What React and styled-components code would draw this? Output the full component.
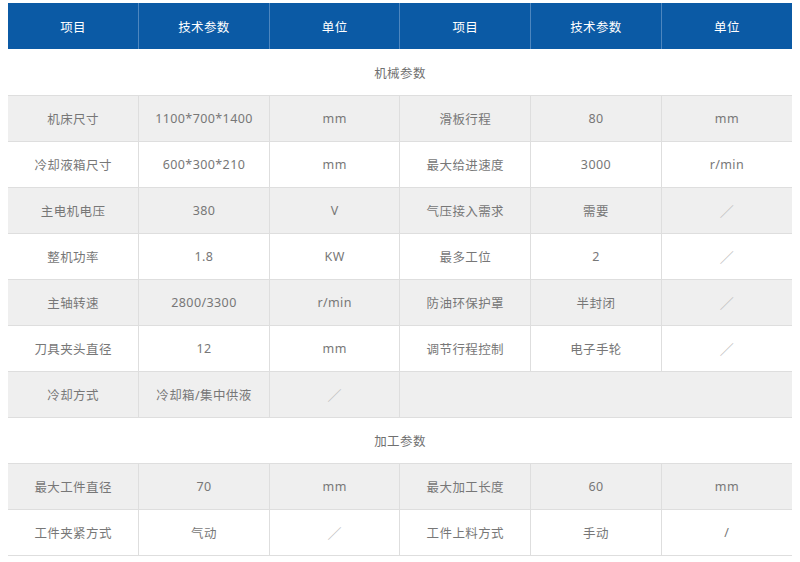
import React from "react";
import styled, { createGlobalStyle, css } from "styled-components";

const GlobalStyle = createGlobalStyle`
  html, body {
    margin: 0;
    padding: 0;
    background: #ffffff;
  }
  body {
    font-family: "Noto Sans", "Noto Sans CJK SC", sans-serif;
  }
`;

const mechanical = [
  ["机床尺寸", "1100*700*1400", "mm", "滑板行程", "80", "mm"],
  ["冷却液箱尺寸", "600*300*210", "mm", "最大给进速度", "3000", "r/min"],
  ["主电机电压", "380", "V", "气压接入需求", "需要", "／"],
  ["整机功率", "1.8", "KW", "最多工位", "2", "／"],
  ["主轴转速", "2800/3300", "r/min", "防油环保护罩", "半封闭", "／"],
  ["刀具夹头直径", "12", "mm", "调节行程控制", "电子手轮", "／"],
];

const processing = [
  ["最大工件直径", "70", "mm", "最大加工长度", "60", "mm"],
  ["工件夹紧方式", "气动", "／", "工件上料方式", "手动", "/"],
];

const headers = ["项目", "技术参数", "单位", "项目", "技术参数", "单位"];

function Value({ children }) {
  if (children === "／") return <Slash>／</Slash>;
  return children;
}

function App() {
  return (
    <Page>
      <GlobalStyle />
      <SpecTable>
        <thead>
          <tr>
            {headers.map((h, i) => (
              <HeadCell key={i}>{h}</HeadCell>
            ))}
          </tr>
        </thead>
        <tbody>
          <tr>
            <SectionCell colSpan={6}>机械参数</SectionCell>
          </tr>
          {mechanical.map((row, r) => (
            <Row key={r} shaded={r % 2 === 0}>
              {row.map((v, c) => (
                <Cell key={c}>
                  <Value>{v}</Value>
                </Cell>
              ))}
            </Row>
          ))}
          <Row shaded>
            <Cell>冷却方式</Cell>
            <Cell>冷却箱/集中供液</Cell>
            <Cell>
              <Slash>／</Slash>
            </Cell>
            <Cell colSpan={3} />
          </Row>
          <tr>
            <SectionCell colSpan={6}>加工参数</SectionCell>
          </tr>
          {processing.map((row, r) => (
            <Row key={r} shaded={r % 2 === 0}>
              {row.map((v, c) => (
                <Cell key={c}>
                  <Value>{v}</Value>
                </Cell>
              ))}
            </Row>
          ))}
        </tbody>
      </SpecTable>
    </Page>
  );
}

const Page = styled.div`
  padding: 3px 8px 0;
`;

const SpecTable = styled.table`
  width: 784px;
  table-layout: fixed;
  border-collapse: collapse;
  font-size: 12.5px;
  letter-spacing: 0.4px;
  color: #777777;
`;

const HeadCell = styled.th`
  height: 46px;
  padding: 0;
  background: #0b5aa5;
  color: #ffffff;
  font-weight: 400;
  text-align: center;
  border-left: 1px solid #4d86bf;
  box-sizing: border-box;

  &:first-child {
    border-left: none;
  }
`;

const SectionCell = styled.td`
  height: 46px;
  padding: 1px 0 0;
  text-align: center;
  background: #ffffff;
  color: #707070;
  box-sizing: border-box;
`;

const Row = styled.tr`
  background: #ffffff;
  border-top: 1px solid #dedede;
  border-bottom: 1px solid #dedede;

  ${(props) =>
    props.shaded &&
    css`
      background: #efefef;
    `}
`;

const Cell = styled.td`
  height: 46px;
  padding: 0;
  text-align: center;
  box-sizing: border-box;
  border-left: 1px solid #dedede;

  &:first-child {
    border-left: none;
  }
`;

const Slash = styled.span`
  color: #c0c0c0;
  font-size: 14px;
`;

export default App;
